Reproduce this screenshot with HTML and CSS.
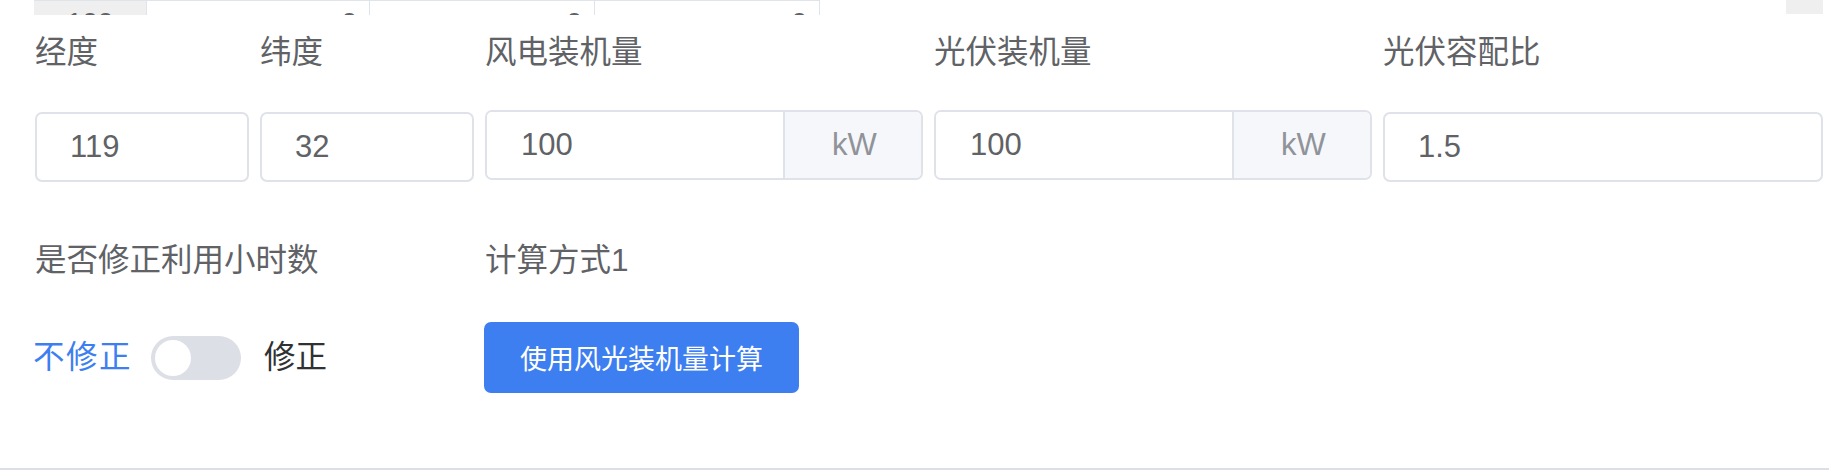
FILE: index.html
```html
<!DOCTYPE html>
<html lang="zh-CN">
<head>
<meta charset="utf-8">
<title>参数设置</title>
<link rel="stylesheet" href="styles.css">
</head>
<body>
<div class="panel">
  <div class="strip">
    <div class="cell cell-index">100</div>
    <div class="cell cell-num cell-w1">0</div>
    <div class="cell cell-num cell-w2">0</div>
    <div class="cell cell-num cell-w2">0</div>
    <div class="strip-fill"></div>
    <div class="strip-gutter"></div>
  </div>

  <div class="grid row-first">
    <div class="item">
      <div class="label">经度</div>
      <div class="control"><span class="value">119</span></div>
    </div>
    <div class="item">
      <div class="label">纬度</div>
      <div class="control"><span class="value">32</span></div>
    </div>
    <div class="item">
      <div class="label">风电装机量</div>
      <div class="group">
        <div class="group-input"><span class="value">100</span></div>
        <div class="addon">kW</div>
      </div>
    </div>
    <div class="item">
      <div class="label">光伏装机量</div>
      <div class="group">
        <div class="group-input"><span class="value">100</span></div>
        <div class="addon">kW</div>
      </div>
    </div>
    <div class="item">
      <div class="label">光伏容配比</div>
      <div class="control"><span class="value">1.5</span></div>
    </div>
  </div>

  <div class="grid row-second">
    <div class="item item-wide">
      <div class="label">是否修正利用小时数</div>
      <div class="switch-row">
        <span class="switch-text active">不修正</span>
        <span class="switch"><span class="knob"></span></span>
        <span class="switch-text">修正</span>
      </div>
    </div>
    <div class="item item-calc">
      <div class="label">计算方式1</div>
      <div class="action-row">
        <button class="btn-primary" type="button">使用风光装机量计算</button>
      </div>
    </div>
  </div>
</div>
</body>
</html>
```

FILE: styles.css
```css
html, body {
  margin: 0;
  padding: 0;
  background: #ffffff;
}

body {
  font-family: "Liberation Sans", "Noto Sans CJK SC", sans-serif;
  color: #606266;
}

.panel {
  box-sizing: border-box;
  height: 470px;
  border-bottom: 2px solid #dcdfe6;
}

/* clipped table remnant at the top */
.strip {
  display: flex;
  height: 15px;
  overflow: hidden;
  padding-left: 34px;
  padding-right: 6px;
}

.cell {
  box-sizing: border-box;
  flex: none;
  height: 70px;
  border-top: 1px solid #dfe3ea;
  border-right: 1px solid #dfe3ea;
  font-size: 28px;
  line-height: 28px;
  padding-top: 8px;
  color: #606266;
}

.cell-index {
  width: 113px;
  background: #efefef;
  text-align: center;
}

.cell-num {
  text-align: right;
  padding-right: 12px;
}

.cell-w1 { width: 223px; }
.cell-w2 { width: 225px; }

.strip-fill { flex: 1; }

.strip-gutter {
  flex: none;
  width: 37px;
  height: 14px;
  background: #efefef;
}

/* form grid */
.grid {
  display: grid;
  grid-template-columns: 214px 214px 438px 438px 440px;
  column-gap: 11px;
  padding-left: 35px;
}

.row-first {
  padding-top: 2px;
}

.row-second {
  margin-top: 43px;
}

.item-wide {
  grid-column: 1 / span 2;
}

.item-calc {
  grid-column: 3;
}

.label {
  font-size: 31.5px;
  line-height: 70px;
  height: 70px;
  color: #606266;
  white-space: nowrap;
}

.row-first .label {
  margin-bottom: 25px;
}

.row-second .label {
  margin-bottom: 27px;
}

.control {
  box-sizing: border-box;
  height: 70px;
  border: 2px solid #dfe2e8;
  border-radius: 7px;
  display: flex;
  align-items: center;
  padding-left: 33px;
  background: #fff;
}

.value {
  font-size: 31px;
  color: #606266;
}

.group {
  box-sizing: border-box;
  height: 70px;
  margin-top: -2px;
  display: flex;
  border: 2px solid #dfe2e8;
  border-radius: 7px;
  overflow: hidden;
}

.group-input {
  flex: 1;
  display: flex;
  align-items: center;
  padding-left: 34px;
  background: #fff;
}

.addon {
  flex: none;
  box-sizing: border-box;
  width: 138px;
  border-left: 2px solid #dfe2e8;
  background: #f5f7fa;
  color: #909399;
  font-size: 31px;
  display: flex;
  align-items: center;
  justify-content: center;
  padding-left: 3px;
}

/* switch */
.switch-row {
  height: 71px;
  display: flex;
  align-items: center;
  margin-left: -2px;
}

.switch-text {
  font-size: 31.5px;
  color: #303133;
  line-height: 1;
}

.switch-text.active {
  color: #3d7ef0;
  letter-spacing: 1.5px;
  margin-right: 19px;
}

.switch {
  box-sizing: border-box;
  width: 90px;
  height: 44px;
  border-radius: 22px;
  background: #dcdfe6;
  padding: 4px;
  display: flex;
  align-items: center;
  margin-right: 23px;
}

.knob {
  width: 36px;
  height: 36px;
  border-radius: 50%;
  background: #ffffff;
}

/* button */
.action-row {
  height: 71px;
  display: flex;
  align-items: center;
  margin-left: -1px;
}

.btn-primary {
  height: 71px;
  padding: 0 36px;
  border: none;
  border-radius: 7px;
  background: #3d7ef0;
  color: #ffffff;
  font-family: "Liberation Sans", "Noto Sans CJK SC", sans-serif;
  font-size: 27px;
  cursor: pointer;
}
```
